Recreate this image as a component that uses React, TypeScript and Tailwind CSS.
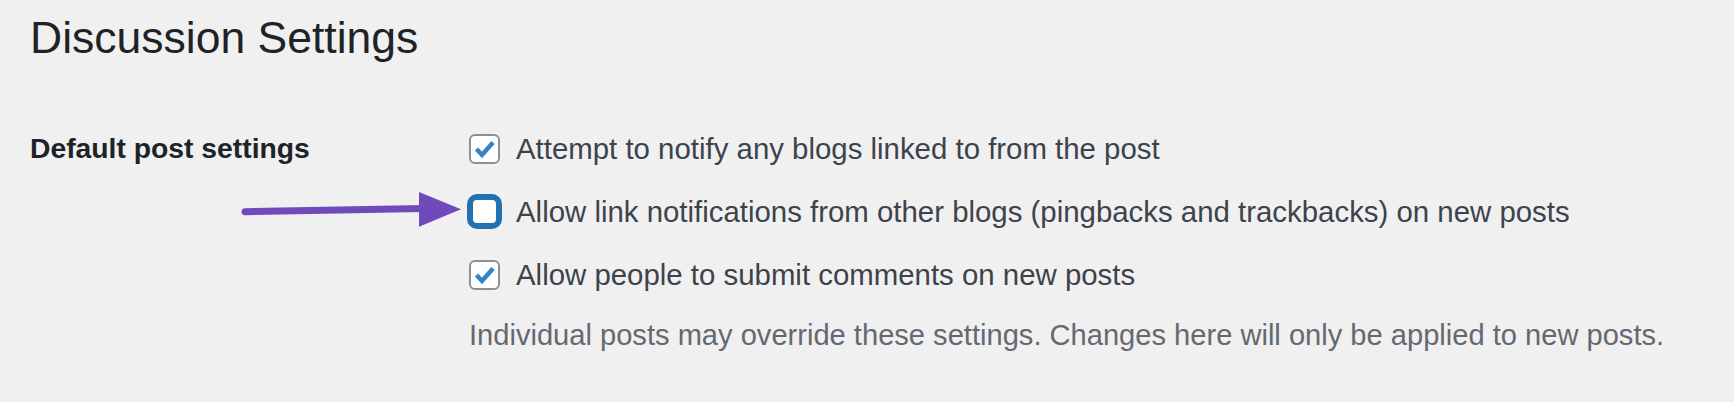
import React from "react";

type Option = {
  label: string;
  checked: boolean;
  focused?: boolean;
};

const options: Option[] = [
  { label: "Attempt to notify any blogs linked to from the post", checked: true },
  {
    label:
      "Allow link notifications from other blogs (pingbacks and trackbacks) on new posts",
    checked: false,
    focused: true,
  },
  { label: "Allow people to submit comments on new posts", checked: true },
];

const Checkbox = ({ checked, focused }: { checked: boolean; focused?: boolean }) => {
  if (focused) {
    return (
      <span className="block w-[31px] h-[31px] shrink-0 rounded-[8px] bg-white border-[4px] border-[#2271b1] shadow-[0_0_0_2px_#2271b1]" />
    );
  }
  return (
    <span className="relative block w-[31px] h-[30px] shrink-0 rounded-[6px] bg-white border-2 border-[#8c8f94]">
      {checked && (
        <svg
          className="absolute left-[-2px] top-[-2px]"
          width="31"
          height="30"
          viewBox="0 0 31 30"
        >
          <polyline
            points="7.5,15 13,21 24,8.5"
            fill="none"
            stroke="#3582c4"
            strokeWidth="4.4"
            strokeLinejoin="miter"
          />
        </svg>
      )}
    </span>
  );
};

export default function App() {
  return (
    <div className="relative w-[1734px] h-[402px] overflow-hidden bg-[#f0f0f1] pl-[30px] font-['Liberation_Sans',Arial,sans-serif]">
      <h1 className="pt-[16px] text-[44.5px] leading-[44px] font-normal text-[#1d2327]">
        Discussion Settings
      </h1>

      <div className="flex mt-[57px]">
        <div className="w-[439px] shrink-0 pt-[17px] text-[28.3px] leading-[28px] font-bold text-[#1d2327]">
          Default post settings
        </div>
        <div>
          {options.map((o) => (
            <label key={o.label} className="flex items-center h-[63px] gap-[16px]">
              <Checkbox checked={o.checked} focused={o.focused} />
              <span className="text-[29.4px] leading-[29px] text-[#3c434a] whitespace-nowrap">
                {o.label}
              </span>
            </label>
          ))}
          <p className="mt-[15px] text-[29.1px] leading-[29px] text-[#646970] whitespace-nowrap">
            Individual posts may override these settings. Changes here will only be
            applied to new posts.
          </p>
        </div>
      </div>

      {/* annotation arrow */}
      <svg
        className="absolute left-[240px] top-[185px]"
        width="230"
        height="50"
        viewBox="0 0 230 50"
      >
        <line
          x1="5"
          y1="26.7"
          x2="184"
          y2="23.4"
          stroke="#7049ba"
          strokeWidth="7"
          strokeLinecap="round"
        />
        <polygon points="179,7 179,41.7 221,24.3" fill="#7049ba" />
      </svg>
    </div>
  );
}
